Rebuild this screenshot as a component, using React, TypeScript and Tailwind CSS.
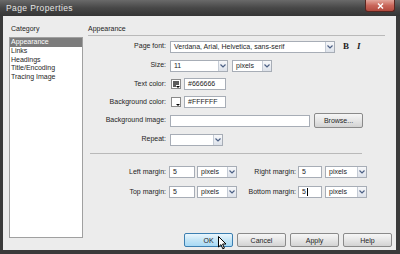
import React from "react"

function Arrow() {
  return (
    <div className="w-[9px] h-full border-l border-[#c5ccd6] bg-gradient-to-b from-[#f7f8fa] to-[#dde2ea] flex items-center justify-center shrink-0">
      <svg width="6" height="4" viewBox="0 0 6 4">
        <path d="M0.5 0.5 L3 3 L5.5 0.5" fill="none" stroke="#4d6185" strokeWidth="1.2" />
      </svg>
    </div>
  )
}

function Combo({ value, w, arrowBox = false }: { value: string; w: string; arrowBox?: boolean }) {
  return (
    <div className={`${w} h-[12px] bg-white border border-[#a7adb6] flex items-stretch`}>
      <span className="flex-1 pl-[3px] leading-[10px] whitespace-nowrap overflow-hidden">{value}</span>
      {arrowBox ? <Arrow /> : <Arrow />}
    </div>
  )
}

function Field({ value, w }: { value: string; w: string }) {
  return (
    <div className={`${w} h-[12px] bg-white border border-[#a7adb6] pl-[3px] leading-[10px] whitespace-nowrap`}>
      {value}
    </div>
  )
}

function Swatch({ fill }: { fill: string }) {
  return (
    <div className="w-[10px] h-[10px] border border-[#8a8a8a] bg-white p-[1px] relative shrink-0">
      <div className={`w-full h-full ${fill}`} />
      <div className="absolute right-0 bottom-0 w-[4px] h-[3px] bg-white flex items-end justify-center">
        <div className="w-0 h-0 border-l-[2px] border-r-[2px] border-t-[2px] border-l-transparent border-r-transparent border-t-black" />
      </div>
    </div>
  )
}

function Button({ label, primary = false }: { label: string; primary?: boolean }) {
  return (
    <div
      className={`w-[49px] h-[14px] rounded-[2px] border flex items-center justify-center leading-none ${
        primary
          ? "border-[#3c7fb1] bg-gradient-to-b from-[#eaf6fd] via-[#c4e5f6] to-[#a7d9f5]"
          : "border-[#8a8a8a] bg-gradient-to-b from-[#f6f6f6] via-[#e6e6e6] to-[#d3d3d3]"
      }`}
    >
      {label}
    </div>
  )
}

export default function App() {
  const rows = [
    { label: "Page font:", h: "h-[19px]" },
  ]
  void rows

  return (
    <div className="w-[400px] h-[254px] bg-[#3a3a3a] flex flex-col overflow-hidden relative font-['Liberation_Sans',Arial,sans-serif] text-[7px] text-[#1e1e1e]">
      {/* title bar */}
      <div className="h-[16px] shrink-0 flex items-start bg-gradient-to-b from-[#6a6a6a] via-[#474747] to-[#353535]">
        <span className="ml-[6px] mt-[3px] text-[8.5px] leading-[10px] tracking-[0.4px] text-[#e6e6e6]">Page Properties</span>
        <div className="ml-auto mr-[5px] w-[30px] h-[12px] rounded-b-[3px] border border-t-0 border-[#5a2620] bg-gradient-to-b from-[#e3a69c] via-[#c9665a] to-[#b24a3e] flex items-center justify-center">
          <svg width="7" height="6" viewBox="0 0 7 6">
            <path d="M1 0.5 L6 5.5 M6 0.5 L1 5.5" stroke="#ffffff" strokeWidth="1.4" />
          </svg>
        </div>
      </div>

      {/* body */}
      <div className="flex-1 ml-[3px] mr-[4px] mb-[4px] bg-[#ececec] flex">
        {/* category */}
        <div className="w-[80px] pl-[6px] pt-[8px] flex flex-col shrink-0">
          <div className="h-[9px] leading-[9px] pl-[2px]">Category</div>
          <div className="mt-[4px] w-[74px] h-[201px] bg-white border border-[#a0a0a0] pt-[0px] leading-[8.6px]">
            <div className="bg-[#7c7c7c] text-white pl-[1px] h-[9px]">Appearance</div>
            <div className="pl-[1px]">Links</div>
            <div className="pl-[1px]">Headings</div>
            <div className="pl-[1px]">Title/Encoding</div>
            <div className="pl-[1px]">Tracing Image</div>
          </div>
        </div>

        {/* appearance */}
        <div className="ml-[5px] w-[304px] pt-[8px] flex flex-col">
          <div className="h-[9px] leading-[9px]">Appearance</div>
          <div className="mt-[2px] w-[297px] h-px bg-[#b9b9b9]" />

          <div className="mt-[1px] flex flex-col">
            <div className="h-[19px] flex items-center">
              <div className="w-[78px] text-right">Page font:</div>
              <div className="ml-[4px]">
                <Combo value="Verdana, Arial, Helvetica, sans-serif" w="w-[165px]" />
              </div>
              <span className="ml-[8px] font-['Liberation_Serif',serif] font-bold text-[9px] leading-none">B</span>
              <span className="ml-[8px] font-['Liberation_Serif',serif] font-bold italic text-[9px] leading-none">I</span>
            </div>
            <div className="h-[19px] flex items-center">
              <div className="w-[78px] text-right">Size:</div>
              <div className="ml-[4px]">
                <Combo value="11" w="w-[58px]" />
              </div>
              <div className="ml-[4px]">
                <Combo value="pixels" w="w-[40px]" />
              </div>
            </div>
            <div className="h-[18px] flex items-center">
              <div className="w-[78px] text-right">Text color:</div>
              <div className="ml-[5px]">
                <Swatch fill="bg-[#5c5c5c]" />
              </div>
              <div className="ml-[3px]">
                <Field value="#666666" w="w-[42px]" />
              </div>
            </div>
            <div className="h-[18px] flex items-center">
              <div className="w-[78px] text-right">Background color:</div>
              <div className="ml-[5px]">
                <Swatch fill="bg-white" />
              </div>
              <div className="ml-[3px]">
                <Field value="#FFFFFF" w="w-[42px]" />
              </div>
            </div>
            <div className="h-[19px] flex items-center">
              <div className="w-[78px] text-right">Background image:</div>
              <div className="ml-[4px]">
                <Field value="" w="w-[140px]" />
              </div>
              <div className="ml-[4px] w-[49px] h-[15px] rounded-[2px] border border-[#8a8a8a] bg-gradient-to-b from-[#f6f6f6] via-[#e6e6e6] to-[#d3d3d3] flex items-center justify-center leading-none">
                Browse...
              </div>
            </div>
            <div className="h-[19px] flex items-center">
              <div className="w-[78px] text-right">Repeat:</div>
              <div className="ml-[4px]">
                <Combo value="" w="w-[53px]" />
              </div>
            </div>
          </div>

          <div className="mt-[4px] ml-[2px] w-[272px] h-px bg-[#b9b9b9]" />

          <div className="mt-[12px] h-[12px] flex items-center">
            <div className="w-[78px] text-right">Left margin:</div>
            <div className="ml-[3px]">
              <Field value="5" w="w-[26px]" />
            </div>
            <div className="ml-[2px]">
              <Combo value="pixels" w="w-[40px]" />
            </div>
            <div className="w-[59px] text-right">Right margin:</div>
            <div className="ml-[2px]">
              <Field value="5" w="w-[24px]" />
            </div>
            <div className="ml-[3px]">
              <Combo value="pixels" w="w-[42px]" />
            </div>
          </div>
          <div className="mt-[8px] h-[12px] flex items-center">
            <div className="w-[78px] text-right">Top margin:</div>
            <div className="ml-[3px]">
              <Field value="5" w="w-[26px]" />
            </div>
            <div className="ml-[2px]">
              <Combo value="pixels" w="w-[40px]" />
            </div>
            <div className="w-[59px] text-right">Bottom margin:</div>
            <div className="ml-[2px] w-[24px] h-[12px] bg-white border border-[#a7adb6] pl-[3px] leading-[10px] flex items-center">
              5<span className="w-px h-[8px] bg-black ml-[1px]" />
            </div>
            <div className="ml-[3px]">
              <Combo value="pixels" w="w-[42px]" />
            </div>
          </div>

          <div className="mt-auto mb-[3px] flex justify-end gap-[4px]">
            <Button label="OK" primary />
            <Button label="Cancel" />
            <Button label="Apply" />
            <Button label="Help" />
          </div>
        </div>
      </div>

      {/* mouse cursor over OK */}
      <svg className="absolute left-[218px] top-[236px]" width="9" height="14" viewBox="0 0 9 14">
        <path d="M0.5 0.5 L0.5 11 L3 8.6 L4.8 12.8 L6.4 12.1 L4.6 8 L8 8 Z" fill="#ffffff" stroke="#000000" strokeWidth="1" strokeLinejoin="round" />
      </svg>
    </div>
  )
}
